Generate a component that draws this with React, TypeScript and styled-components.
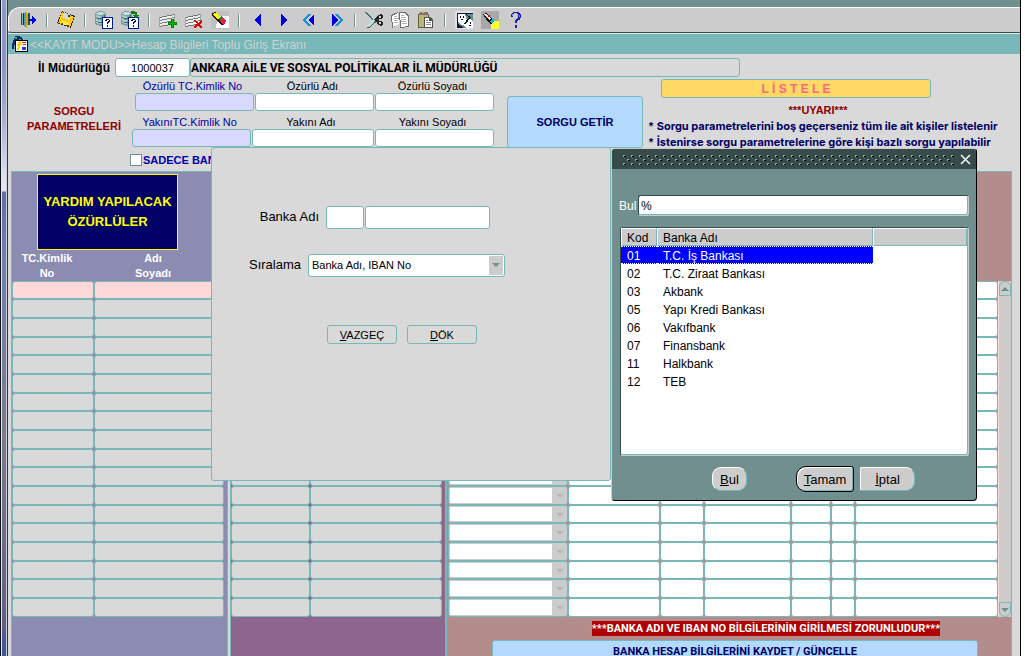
import React from 'react';
import styled, { createGlobalStyle, css } from 'styled-components';

const teal = '#78b8b8';
const slate = '#718f8f';
const panelGray = '#d9d9d9';
const chrome = '#cccccc';
const navy = '#000066';

const GlobalStyle = createGlobalStyle`
  * { box-sizing: border-box; }
  html, body { margin: 0; padding: 0; background: #fff; }
  body, input, select, button, table {
    font-family: 'Liberation Sans', Arial, Helvetica, sans-serif;
    font-size: 11px;
    color: #000;
  }
`;

/* ---------- window shell ---------- */

const Shell = styled.div`
  display: grid;
  grid-template-columns: 8px minmax(0, 1fr) 1px 4px;
  height: 100vh;
  overflow: hidden;
`;

const DesktopEdge = styled.div`
  border-left: 1px solid #111118;
  border-right: 1px solid #30344c;
  background: linear-gradient(
    #8c9cc8 0, #8494c8 60px, #a8b0d4 120px, #e0e4f4 180px, #e0e4f4 191px,
    #6070a8 192px, #7080b0 260px, #7c7c8c 430px, #625f84 625px, #40589a 645px
  );
  box-shadow: inset 1px 0 #e4e4ec, inset -1px 0 #d0d0dc;
`;

const WindowEdge = styled.div`
  background: #000;
`;

const Main = styled.div`
  display: flex;
  flex-direction: column;
  background: ${slate};
  padding-top: 7px;
  min-width: 0;
`;

const Toolbar = styled.div`
  display: flex;
  align-items: center;
  flex: none;
  height: 26px;
  padding-left: 6px;
  background: ${chrome};
  border-top: 1px solid #fff;
  border-left: 1px solid #fff;
  border-bottom: 1px solid #374b4b;
  border-radius: 12px 0 0 4px;
`;

const ToolButton = styled.button`
  display: flex;
  align-items: center;
  justify-content: center;
  width: 26px;
  height: 22px;
  padding: 0;
  border: 0;
  background: none;
`;

const Separator = styled.span`
  width: 2px;
  height: 13px;
  margin: 0 5px;
  border-left: 1px solid ${slate};
  border-right: 1px solid #fff;
`;

const TitleBar = styled.header`
  display: flex;
  align-items: center;
  gap: 2px;
  flex: none;
  height: 21px;
  padding-left: 4px;
  border-top: 1px solid #e8e8e8;
  background: ${teal};
`;

const Title = styled.h1`
  margin: 0;
  padding-top: 2px;
  font-size: 12px;
  line-height: 18px;
  font-weight: normal;
  color: #d0d0d0;
  white-space: nowrap;
`;

const Content = styled.main`
  position: relative;
  display: flex;
  flex-direction: column;
  flex: 1;
  min-height: 0;
  padding-top: 4px;
  background: ${panelGray};
`;

/* ---------- shared controls ---------- */

const field = css`
  border: 1px solid ${teal};
  border-radius: 3px;
  outline: 0;
  margin: 0;
`;

const TextField = styled.input<{ $w: number; $h?: number; $bg?: string; $bold?: boolean; $center?: boolean }>`
  ${field}
  display: block;
  width: ${p => p.$w}px;
  height: ${p => p.$h ?? 18}px;
  padding: 0 2px;
  background: ${p => p.$bg ?? '#fff'};
  font-weight: ${p => (p.$bold ? 'bold' : 'normal')};
  text-align: ${p => (p.$center ? 'center' : 'left')};
`;

/* ---------- query area ---------- */

const OfficeRow = styled.div`
  display: flex;
  align-items: center;
  height: 19px;
`;

const OfficeLabel = styled.label`
  width: 102px;
  margin-right: 5px;
  text-align: right;
  font-size: 12px;
  font-weight: bold;
  white-space: nowrap;
`;

const OfficeName = styled(TextField)`
  padding: 0;
  font-family: Roboto, 'Liberation Sans', sans-serif;
  font-size: 12px;
`;

const QueryArea = styled.section`
  display: flex;
  align-items: flex-start;
  height: 94px;
  padding-top: 2px;
`;

const QueryHeading = styled.h2`
  width: 122px;
  margin: 25px 0 0;
  padding-left: 10px;
  font-size: 11px;
  line-height: 15px;
  font-weight: bold;
  text-align: center;
  color: #8c0000;
`;

const QueryFields = styled.div`
  width: 364px;
`;

const FieldRow = styled.div`
  display: flex;
  justify-content: flex-end;
  gap: 1px;
  margin-bottom: 4px;
`;

const FieldGroup = styled.label<{ $blue?: boolean }>`
  font-size: 11px;
  color: ${p => (p.$blue ? '#0000b0' : '#000')};
`;

const FieldCaption = styled.span`
  display: block;
  padding-right: 4px;
  line-height: 14px;
  text-align: center;
  white-space: nowrap;
`;

const CheckLine = styled.label`
  display: flex;
  align-items: center;
  gap: 1px;
  height: 18px;
  font-size: 11px;
  font-weight: bold;
  color: #0000a8;
`;

const CheckBox = styled.input`
  appearance: none;
  width: 12px;
  height: 12px;
  margin: 0;
  border: 1px solid ${slate};
  background: #fff;
`;

const FetchButton = styled.button`
  ${field}
  width: 136px;
  height: 52px;
  margin: 17px 5px 0 13px;
  background: #b3d9ff;
  font-weight: bold;
  color: ${navy};
`;

const Notices = styled.div`
  flex: 1;
  min-width: 0;
  color: ${navy};
  font-weight: bold;
`;

const ListButton = styled.button`
  ${field}
  display: block;
  width: 270px;
  height: 19px;
  margin: 0 0 4px 13px;
  background: #ffd966;
  font-size: 12px;
  font-weight: bold;
  color: #ff6680;
  white-space: pre;
`;

const Warning = styled.p`
  width: 340px;
  margin: 0;
  line-height: 16px;
  text-align: center;
  color: #8c0000;
`;

const Hint = styled.p`
  margin: 0;
  font-family: Inter, 'Liberation Sans', sans-serif;
  font-size: 11px;
  line-height: 16px;
  white-space: nowrap;
`;

/* ---------- data panels ---------- */

const Panels = styled.div`
  display: flex;
  flex: 1;
  min-height: 0;
  padding: 0 8px 0 3px;
`;

const Panel = styled.section<{ $bg: string; $w?: number; $gap?: number }>`
  ${p => (p.$w ? css`flex: none; width: ${p.$w}px;` : css`flex: 1; min-width: 0;`)}
  margin-right: ${p => p.$gap ?? 0}px;
  border: 1px solid ${teal};
  border-bottom: 0;
  background: ${p => p.$bg};
`;

const Banner = styled.h2`
  width: 141px;
  height: 76px;
  margin: 2px 0 0 25px;
  padding-top: 17px;
  border: 1px solid #ffff00;
  background: ${navy};
  font-size: 13px;
  line-height: 20px;
  font-weight: bold;
  text-align: center;
  white-space: nowrap;
  color: #ffff00;
`;

const Spacer = styled.div`
  height: 109px;
`;

const Grid = styled.table`
  width: 100%;
  table-layout: fixed;
  border-spacing: 0;

  th {
    height: 31px;
    padding: 0 12px 0 0;
    font-size: 11px;
    line-height: 15px;
    color: #fff;
  }
  td { padding: 0; height: 19px; }
  tbody tr:nth-child(3n + 1) td { height: 18px; }
`;

const Cell = styled.input<{ $bg: string }>`
  ${field}
  display: block;
  width: 100%;
  height: 19px;
  padding: 0 2px;
  background: ${p => p.$bg};
  tr:nth-child(3n + 1) & { height: 18px; }
`;

const PickCell = styled.div`
  position: relative;
  svg { position: absolute; right: 4px; top: 8px; pointer-events: none; }
`;

const PickSelect = styled.select`
  ${field}
  appearance: none;
  display: block;
  width: 100%;
  height: 19px;
  padding: 0;
  background: linear-gradient(#fff, #fff) 1px 1px / calc(100% - 16px) calc(100% - 2px) no-repeat ${chrome};
  tr:nth-child(3n + 1) & { height: 18px; }
`;

const GridFrame = styled.div`
  display: flex;
  padding-left: 1px;
`;

const GridBody = styled.div<{ $right?: number }>`
  flex: 1;
  min-width: 0;
  padding-right: ${p => p.$right ?? 0}px;
`;

const ScrollTrack = styled.div`
  display: flex;
  flex-direction: column;
  justify-content: space-between;
  width: 13px;
  border-left: 1px solid #ffd9d9;
  background: ${chrome};
`;

const ScrollButton = styled.button<{ $down?: boolean }>`
  display: flex;
  align-items: center;
  justify-content: center;
  height: 15px;
  padding: 0;
  border: 1px solid ${teal};
  border-radius: ${p => (p.$down ? '0 0 6px 6px' : '6px 6px 0 0')};
  background: ${chrome};
`;

const AlertArea = styled.div`
  padding: 4px 33px 0 45px;
`;

const AlertLine = styled.div`
  display: flex;
  justify-content: center;
  padding-left: 62px;
  margin-bottom: 4px;
`;

const Alert = styled.p`
  margin: 0;
  background: #b00000;
  font-family: Roboto, 'Liberation Sans', sans-serif;
  font-size: 11px;
  font-weight: bold;
  line-height: 15px;
  white-space: nowrap;
  color: #fff;
`;

const SaveButton = styled.button`
  ${field}
  display: block;
  width: 100%;
  height: 22px;
  background: #b3d9ff;
  font-family: Roboto, 'Liberation Sans', sans-serif;
  font-weight: bold;
  color: ${navy};
`;

/* ---------- floating windows ---------- */

const PrintDialog = styled.section`
  position: absolute;
  left: 203px;
  top: 93px;
  width: 400px;
  height: 334px;
  padding-top: 57px;
  border: 1px solid ${teal};
  border-radius: 3px;
  background: ${panelGray};
`;

const DialogLine = styled.div`
  display: flex;
  align-items: center;
  gap: 1px;
  height: 24px;
  margin-bottom: 24px;
`;

const DialogLabel = styled.label<{ $w: number }>`
  width: ${p => p.$w}px;
  margin-right: 6px;
  text-align: right;
  font-size: 13px;
  line-height: 20px;
`;

const SelectWrap = styled.div`
  position: relative;
  width: 197px;
`;

const SortSelect = styled.select`
  ${field}
  appearance: none;
  display: block;
  width: 100%;
  height: 23px;
  padding: 0 20px 0 3px;
  background: #fff;
`;

const SelectArrow = styled.span`
  position: absolute;
  top: 2px;
  right: 2px;
  display: flex;
  align-items: center;
  justify-content: center;
  width: 14px;
  height: 19px;
  background: ${chrome};
  pointer-events: none;
`;

const DialogActions = styled.div`
  display: flex;
  gap: 10px;
  padding: 24px 0 0 115px;
`;

const FlatButton = styled.button`
  ${field}
  width: 70px;
  height: 19px;
  padding: 0;
  background: ${panelGray};
`;

const FindDialog = styled.section`
  position: absolute;
  left: 603px;
  top: 94px;
  width: 366px;
  height: 353px;
  border: 1px solid #000;
  border-left-color: ${chrome};
  border-top-color: ${chrome};
  border-radius: 4px;
  background: ${slate};
  overflow: hidden;
`;

const FindTitle = styled.div`
  display: flex;
  align-items: center;
  gap: 6px;
  height: 20px;
  padding: 0 5px 0 10px;
  background: #374b4b;
  svg { display: block; }
`;

const GripArea = styled.div`
  flex: 1;
  height: 12px;
`;

const CloseButton = styled.button`
  width: 11px;
  height: 11px;
  padding: 0;
  border: 0;
  background: none;
`;

const FindLine = styled.div`
  display: flex;
  align-items: center;
  margin: 26px 7px 11px 7px;
  height: 21px;
`;

const FindLabel = styled.label`
  width: 19px;
  font-size: 12px;
  color: #fff;
`;

const FindInput = styled.input`
  flex: 1;
  min-width: 0;
  height: 21px;
  padding: 0 2px;
  border: 1px solid #374b4b;
  border-right-color: ${chrome};
  border-bottom-color: ${chrome};
  border-radius: 3px;
  outline: 0;
  background: #fff;
  box-shadow: inset -1px -1px ${teal};
  font-size: 12px;
`;

const ListBox = styled.div`
  height: 229px;
  margin: 0 7px 0 8px;
  border: 1px solid #374b4b;
  border-right-color: ${chrome};
  border-bottom-color: ${chrome};
  border-radius: 3px;
  background: #fff;
  box-shadow: inset -1px -1px ${teal};
  padding-right: 1px;
`;

const BankTable = styled.table`
  width: 100%;
  table-layout: fixed;
  border-spacing: 0;
  font-size: 12px;

  th, td {
    height: 18px;
    padding: 2px 0 0 6px;
    line-height: 14px;
    text-align: left;
    font-weight: normal;
    white-space: nowrap;
  }
  th {
    background: ${chrome};
    border-top: 1px solid #fff;
    border-left: 1px solid #fff;
    border-right: 1px solid ${teal};
    border-bottom: 1px solid ${teal};
    padding-left: 5px;
  }
`;

const BankRow = styled.tr<{ $on?: boolean }>`
  ${p => p.$on && css`
    td:not(:last-child) {
      background: #0000ff;
      color: #fff;
      border-top: 1px dotted #fff;
      border-bottom: 1px dotted #fff;
    }
  `}
`;

const FindActions = styled.div`
  display: flex;
  align-items: center;
  gap: 6px;
  height: 26px;
  margin-top: 10px;
  padding-left: 100px;
`;

const PillButton = styled.button<{ $w: number; $shape: string; $primary?: boolean; $after?: number }>`
  width: ${p => p.$w}px;
  height: ${p => (p.$primary ? 26 : 24)}px;
  margin-right: ${p => p.$after ?? 0}px;
  padding: 0;
  border: 1px solid ${p => (p.$primary ? '#000' : teal)};
  ${p => !p.$primary && css`border-top-color: #fff; border-left-color: #fff;`}
  ${p => p.$primary && css`box-shadow: inset 1px 1px #fff, inset -1px -1px ${teal};`}
  border-radius: ${p => p.$shape};
  background: ${chrome};
  font-size: 13px;
`;

/* ---------- drawings ---------- */

const Icon = ({ children, size = 18 }: { children: React.ReactNode; size?: number }) => (
  <svg width={size} height={size} viewBox="0 0 18 18" shapeRendering="crispEdges" aria-hidden="true">{children}</svg>
);

const QuestionPage = () => (
  <>
    <rect x="7" y="6" width="11" height="12" fill="#002080" />
    <rect x="8" y="7" width="9" height="10" fill="#fff" />
    <path d="M10 9h1V8h3v1h1v2h-1v1h-1v1h-1v-2h1v-1h1V9h-2v1h-2zM12 14h1v2h-1z" fill="#000080" />
  </>
);

const Cylinder = () => (
  <>
    <path d="M3 0h5v1h2v1h1v11h-1v1H8v1H4v-1H1v-1H0V2h1V1h2z" fill="#7aa0a0" />
    <path d="M3 1h5v1h2v1H8v1H3V3H1V2h2z" fill="#c4dede" />
    <path d="M1 4h2v1h3v2H3V6H1zM1 8h2v1h3v2H3v-1H1zM1 11h2v1h3v1H3v-1H1z" fill="#a8cccc" />
    <path d="M9 4h1v9H9zM3 7h4v1H3zM3 11h4v1H3z" fill="#406868" />
  </>
);

const Sheet = () => (
  <>
    <path d="M1 7l14-3v2L1 9zM1 10l14-3v2L1 12zM1 13l14-3v2L1 15z" fill="#f0f0f0" />
    <path d="M0 6l5-1 11-2v1L0 7zM0 9l16-3v1L0 10zM0 12l16-3v1L0 13zM0 15l12-2v1L0 16z" fill="#787878" />
    <path d="M0 6h1v10H0zM15 3h1v6h-1z" fill="#a0a0a0" />
  </>
);

const icons: Record<string, React.ReactNode> = {
  exit: (
    <Icon>
      <path d="M2 3h9v11H2z" fill="#78b0b0" />
      <path d="M2 2h1v12H2zM9 2h2v12H9z" fill="#285050" />
      <path d="M4 2l4-1v16l-4-3z" fill="#58a0a0" />
      <path d="M4 2h1v12H4z" fill="#183838" />
      <path d="M7 1h1v16H7z" fill="#c8a828" />
      <path d="M10 8h3V5h1v1h1v1h1v1h1v2h-1v1h-1v1h-1v1h-1v-3h-3z" fill="#0000e0" />
    </Icon>
  ),
  save: (
    <Icon>
      <path d="M5 0l13 5-4 12L0 12z" fill="#302000" />
      <path d="M5 1l12 5-4 10L1 12z" fill="#ffcc00" />
      <path d="M7 1l7 3-2 5-7-3z" fill="#d8d8d8" />
      <path d="M11 4h2v2h-2z" fill="#303030" />
      <path d="M5 9l7 3-2 3-6-2z" fill="#ffe860" />
      <path d="M4 12h2v1H4zM9 14h3v1H9z" fill="#806000" />
    </Icon>
  ),
  query: <Icon><Cylinder /><QuestionPage /></Icon>,
  run: (
    <Icon>
      <Cylinder /><QuestionPage />
      <path d="M10 0h4v1h2v3h2v1h-1v1h-1v1h-2V6h-1V5h-1V4h2V3h-4z" fill="#108010" />
    </Icon>
  ),
  add: (
    <Icon>
      <Sheet />
      <path d="M12 8h3v3h3v3h-3v3h-3v-3H9v-3h3z" fill="#008000" />
      <path d="M13 9h1v3h3v1h-3v3h-1v-3h-3v-1h3z" fill="#00c000" />
    </Icon>
  ),
  remove: (
    <Icon>
      <Sheet />
      <path d="M9 9h2l2 3 3-3h1v2l-2 2 2 3v1h-2l-2-3-3 3H9v-2l3-2-3-3z" fill="#e00000" />
    </Icon>
  ),
  clear: (
    <Icon>
      <rect x="0" y="0" width="18" height="18" fill="#c0c0c0" />
      <path d="M9 5h9v12H5v-3z" fill="#fff" />
      <path d="M1 2l3-1 10 9-3 5L1 5z" fill="#181800" />
      <path d="M3 2h2l4 4-2 2-5-4z" fill="#ffff00" />
      <path d="M7 8l3-3 2 2-3 3z" fill="#208020" />
      <path d="M9 9l3-2 3 3-1 3-2 1-3-3z" fill="#e02050" />
    </Icon>
  ),
  prev: <Icon><path d="M12 3v12h-1v-1h-1v-1H9v-1H8v-1H7v-1H6V8h1V7h1V6h1V5h1V4h1V3z" fill="#0000e0" /></Icon>,
  next: <Icon><path d="M6 3v12h1v-1h1v-1h1v-1h1v-1h1v-1h1V8h-1V7h-1V6H9V5H8V4H7V3z" fill="#0000e0" /></Icon>,
  first: (
    <Icon>
      <path d="M7 3h3L5 9l5 6H7L2 9z" fill="#1890d8" />
      <path d="M13 3v12L7 9z" fill="#0000e0" />
    </Icon>
  ),
  last: (
    <Icon>
      <path d="M8 3h3l5 6-5 6H8l5-6z" fill="#1890d8" />
      <path d="M5 3v12l6-6z" fill="#0000e0" />
    </Icon>
  ),
  cut: (
    <Icon>
      <path d="M0 2h2l9 7-1 3z" fill="#d8f4f4" />
      <path d="M0 1h1l10 10-1 1zM0 2l1 2 3 3z" fill="#407070" />
      <path d="M1 15h3l7-6-1-2z" fill="#c0e0e0" />
      <path d="M1 16h3l7-7v1l-6 7H2z" fill="#306060" />
      <path d="M9 8l3-2 1-2 3-1 2 1v2l-2 2-4 1 4 1 2 2v2l-2 1-3-1-1-3-3-2zM14 5v2h2V5zM14 11v2h2v-2z" fill="#282828" fillRule="evenodd" />
    </Icon>
  ),
  copy: (
    <Icon>
      <path d="M0 4l7-3 1 12-7 4zM8 1h6l4 3v12l-9 1z" fill="#707070" />
      <path d="M1 5l6-3 1 11-6 3zM9 2h4l4 3v10l-7 1z" fill="#fff" />
      <path d="M3 5h3v1H3zM3 7h4v1H3zM3 9h4v1H3zM3 11h4v1H3zM10 4h3v1h-3zM10 6h5v1h-5zM10 8h5v1h-5zM10 10h5v1h-5zM11 12h5v1h-5z" fill="#b0b0b0" />
    </Icon>
  ),
  paste: (
    <Icon>
      <path d="M1 3h11v14H1z" fill="#606030" />
      <path d="M2 4h9v12H2z" fill="#b8b47c" />
      <path d="M3 1h8l1 3H2z" fill="#787878" />
      <path d="M5 0h2v2H5z" fill="#e0c040" />
      <path d="M7 6h6l3 3v8H7z" fill="#505050" />
      <path d="M8 7h4v3h3v6H8z" fill="#fff" />
      <path d="M9 9h2v1H9zM9 11h5v1H9zM9 13h5v1H9z" fill="#909090" />
    </Icon>
  ),
  keys: (
    <Icon>
      <path d="M0 0h18v18H0z" fill="#e0e0f4" />
      <path d="M2 2h16v15H3z" fill="#6c8c94" />
      <path d="M3 3h7l2 6-5 5-4-3z" fill="#fff" />
      <path d="M8 14l6-7 4 4v6h-7z" fill="#fff" />
      <path d="M2 2h16v1H3v10l6 4H2zM11 3l5 3-6 8-1-1 5-7-3-2z" fill="#101828" />
      <path d="M5 5h1v2H5zM8 5h1v2H8zM6 8h2v1H6zM15 11h1v2h-1zM14 14h2v1h-2z" fill="#0000a0" />
    </Icon>
  ),
  torch: (
    <Icon>
      <rect width="18" height="18" fill="#a8a8a8" />
      <path d="M2 3l3-1 9 8-3 4-5-4z" fill="#101010" />
      <path d="M3 3h2l5 5-2 1z" fill="#f0f0f0" />
      <path d="M7 4h2v2H7z" fill="#e00000" />
      <path d="M9 10l3-3 2 3-3 3z" fill="#00b8e0" />
      <path d="M10 13l4-3h4v8h-8z" fill="#ffff30" />
      <path d="M12 14h1v1h-1zM14 12h1v1h-1zM14 16h1v1h-1zM16 14h1v1h-1zM16 11h1v1h-1z" fill="#fff" />
    </Icon>
  ),
  help: (
    <Icon>
      <path d="M4 3h1V2h1V1h6v1h1v1h1v4h-1v2h-2v1h-1v2H8V9h1V8h1V7h1V3h-1V2H7v1H6v3H4zM8 14h2v3H8z" fill="#2020b0" />
      <path d="M5 3h1v2H5zM12 4h1v2h-1z" fill="#8080e0" />
    </Icon>
  ),
};

const Triangle = ({ down, color = slate }: { down?: boolean; color?: string }) => (
  <svg width="8" height="4" viewBox="0 0 8 4" aria-hidden="true">
    <path d={down ? 'M0 0h8L4 4z' : 'M0 4h8L4 0z'} fill={color} />
  </svg>
);

const AppIcon = () => (
  <svg width="16" height="16" viewBox="0 0 16 16" shapeRendering="crispEdges" aria-hidden="true">
    <path d="M3 0h5v1h2v2h1v5H1V4h1V2h1z" fill="#102878" />
    <path d="M3 1h2v2H3zM7 3h2v2H7z" fill="#50a860" />
    <path d="M0 7h4v2H2v4H0z" fill="#102878" />
    <rect x="3" y="4" width="13" height="12" fill="#000" />
    <rect x="4" y="5" width="11" height="10" fill="#fff" />
    <path d="M10 6h4v1h-4zM11 8h3v1h-3z" fill="#e02020" />
    <path d="M10 11h4v3h-4z" fill="#2040d0" />
    <path d="M7 5h2v3h1v1H8v3H7v2H5v-2h1v-2H5V8h1z" fill="#ffd000" />
  </svg>
);

const Grip = () => (
  <svg width="100%" height="12" shapeRendering="crispEdges" aria-hidden="true">
    <defs>
      <pattern id="grip" width="8" height="8" patternUnits="userSpaceOnUse">
        <path d="M2 3h2v1H2zM6 7h2v1H6z" fill="#000" />
        <path d="M1 2h2v1H1zM1 3h1v1H1zM5 6h2v1H5zM5 7h1v1H5z" fill={teal} />
      </pattern>
    </defs>
    <rect width="100%" height="12" fill="url(#grip)" />
  </svg>
);

/* ---------- page ---------- */

const toolGroups: [string, string][][] = [
  [['exit', 'Çıkış']],
  [['save', 'Kaydet']],
  [['query', 'Sorgu'], ['run', 'Sorguyu çalıştır']],
  [['add', 'Kayıt ekle'], ['remove', 'Kayıt sil'], ['clear', 'Temizle']],
  [['prev', 'Önceki'], ['next', 'Sonraki'], ['first', 'İlk'], ['last', 'Son']],
  [['cut', 'Kes'], ['copy', 'Kopyala'], ['paste', 'Yapıştır']],
  [['keys', 'Tuşlar'], ['torch', 'Bul'], ['help', 'Yardım']],
];

const banks: [string, string][] = [
  ['01', 'T.C. İş Bankası'],
  ['02', 'T.C. Ziraat Bankası'],
  ['03', 'Akbank'],
  ['05', 'Yapı Kredi Bankası'],
  ['06', 'Vakıfbank'],
  ['07', 'Finansbank'],
  ['11', 'Halkbank'],
  ['12', 'TEB'],
];

const rows = Array.from({ length: 18 }, (_, i) => i);

const PersonGrid = ({ first, head, activeFirst }: { first: number; head?: [string, string][]; activeFirst?: boolean }) => (
  <Grid>
    <colgroup><col style={{ width: first }} /><col /></colgroup>
    {head && (
      <thead>
        <tr>{head.map(([a, b]) => <th key={a} scope="col">{a}<br />{b}</th>)}</tr>
      </thead>
    )}
    <tbody>
      {rows.map(r => (
        <tr key={r}>
          {[0, 1].map(c => (
            <td key={c}>
              <Cell aria-label={`${r + 1}-${c + 1}`} readOnly $bg={activeFirst && r === 0 ? '#ffd9d9' : panelGray} />
            </td>
          ))}
        </tr>
      ))}
    </tbody>
  </Grid>
);

const accountColumns = [120, 92, 44, 87, 40, 24];

const AccountGrid = () => (
  <Grid>
    <colgroup>
      {accountColumns.map((w, i) => <col key={i} style={{ width: w }} />)}
      <col />
    </colgroup>
    <tbody>
      {rows.map(r => (
        <tr key={r}>
          <td>
            <PickCell>
              <PickSelect aria-label={`${r + 1}`} />
              <Triangle down color="#b8b8b8" />
            </PickCell>
          </td>
          {accountColumns.map((_, c) => (
            <td key={c}><Cell aria-label={`${r + 1}-${c + 2}`} readOnly $bg="#fff" /></td>
          ))}
        </tr>
      ))}
    </tbody>
  </Grid>
);

export default function App() {
  return (
    <>
      <GlobalStyle />
      <Shell>
        <DesktopEdge />
        <Main>
          <Toolbar role="toolbar">
            {toolGroups.map((group, g) => (
              <React.Fragment key={g}>
                {g > 0 && <Separator />}
                {group.map(([name, label]) => (
                  <ToolButton key={name} aria-label={label}>{icons[name]}</ToolButton>
                ))}
              </React.Fragment>
            ))}
          </Toolbar>
          <TitleBar>
            <AppIcon />
            <Title>&lt;&lt;KAYIT MODU&gt;&gt;Hesap Bilgileri Toplu Giriş Ekranı</Title>
          </TitleBar>
          <Content>
            <OfficeRow>
              <OfficeLabel htmlFor="office">İl Müdürlüğü</OfficeLabel>
              <TextField id="office" $w={75} $h={19} $center defaultValue="1000037" />
              <OfficeName aria-label="İl Müdürlüğü adı" $w={550} $h={19} $bg={panelGray} $bold readOnly
                value="ANKARA AİLE VE SOSYAL POLİTİKALAR İL MÜDÜRLÜĞÜ" />
            </OfficeRow>
            <QueryArea>
              <QueryHeading>SORGU<br />PARAMETRELERİ</QueryHeading>
              <QueryFields>
                <FieldRow>
                  <FieldGroup $blue><FieldCaption>Özürlü TC.Kimlik No</FieldCaption><TextField $w={119} $bg="#d9d9ff" /></FieldGroup>
                  <FieldGroup><FieldCaption>Özürlü Adı</FieldCaption><TextField $w={119} /></FieldGroup>
                  <FieldGroup><FieldCaption>Özürlü Soyadı</FieldCaption><TextField $w={119} /></FieldGroup>
                </FieldRow>
                <FieldRow>
                  <FieldGroup $blue><FieldCaption>YakınıTC.Kimlik No</FieldCaption><TextField $w={119} $bg="#d9d9ff" /></FieldGroup>
                  <FieldGroup><FieldCaption>Yakını Adı</FieldCaption><TextField $w={122} /></FieldGroup>
                  <FieldGroup><FieldCaption>Yakını Soyadı</FieldCaption><TextField $w={119} /></FieldGroup>
                </FieldRow>
                <CheckLine><CheckBox type="checkbox" />SADECE BAN</CheckLine>
              </QueryFields>
              <FetchButton>SORGU GETİR</FetchButton>
              <Notices>
                <ListButton>L İ S T E L E</ListButton>
                <Warning>***UYARI***</Warning>
                <Hint>* Sorgu parametrelerini boş geçerseniz tüm ile ait kişiler listelenir</Hint>
                <Hint>* İstenirse sorgu parametrelerine göre kişi bazlı sorgu yapılabilir</Hint>
              </Notices>
            </QueryArea>
            <Panels>
              <Panel $bg="#8c8cb3" $w={217} $gap={2}>
                <Banner>YARDIM YAPILACAK<br />ÖZÜRLÜLER</Banner>
                <GridBody $right={3}>
                  <PersonGrid first={82} head={[['TC.Kimlik', 'No'], ['Adı', 'Soyadı']]} activeFirst />
                </GridBody>
              </Panel>
              <Panel $bg="#8c668c" $w={216}>
                <Spacer />
                <GridBody $right={3}><PersonGrid first={79} /></GridBody>
              </Panel>
              <Panel $bg="#b38c8c">
                <Spacer />
                <GridFrame>
                  <GridBody><AccountGrid /></GridBody>
                  <ScrollTrack>
                    <ScrollButton aria-label="Yukarı"><Triangle /></ScrollButton>
                    <ScrollButton aria-label="Aşağı" $down><Triangle down /></ScrollButton>
                  </ScrollTrack>
                </GridFrame>
                <AlertArea>
                  <AlertLine>
                    <Alert>***BANKA ADI VE IBAN NO BİLGİLERİNİN GİRİLMESİ ZORUNLUDUR***</Alert>
                  </AlertLine>
                  <SaveButton>BANKA HESAP BİLGİLERİNİ KAYDET / GÜNCELLE</SaveButton>
                </AlertArea>
              </Panel>
            </Panels>

            <PrintDialog role="dialog" aria-label="Döküm">
              <DialogLine>
                <DialogLabel $w={107} htmlFor="bankCode">Banka Adı</DialogLabel>
                <TextField id="bankCode" $w={38} $h={23} />
                <TextField aria-label="Banka Adı" $w={125} $h={23} />
              </DialogLine>
              <DialogLine>
                <DialogLabel $w={89} htmlFor="sort">Sıralama</DialogLabel>
                <SelectWrap>
                  <SortSelect id="sort"><option>Banka Adı, IBAN No</option></SortSelect>
                  <SelectArrow><Triangle down /></SelectArrow>
                </SelectWrap>
              </DialogLine>
              <DialogActions>
                <FlatButton><u>V</u>AZGEÇ</FlatButton>
                <FlatButton><u>D</u>ÖK</FlatButton>
              </DialogActions>
            </PrintDialog>

            <FindDialog role="dialog" aria-label="Bul">
              <FindTitle>
                <GripArea><Grip /></GripArea>
                <CloseButton aria-label="Kapat">
                  <svg width="11" height="11" viewBox="0 0 11 11"><path d="M1 1l9 9M10 1l-9 9" stroke="#f4f4f0" strokeWidth="1.6" /></svg>
                </CloseButton>
              </FindTitle>
              <FindLine>
                <FindLabel htmlFor="find">Bul</FindLabel>
                <FindInput id="find" defaultValue="%" />
              </FindLine>
              <ListBox>
                <BankTable>
                  <colgroup><col style={{ width: 36 }} /><col style={{ width: 216 }} /><col /></colgroup>
                  <thead>
                    <tr><th scope="col">Kod</th><th scope="col">Banka Adı</th><th /></tr>
                  </thead>
                  <tbody>
                    {banks.map(([code, name], i) => (
                      <BankRow key={code} $on={i === 0}><td>{code}</td><td>{name}</td><td /></BankRow>
                    ))}
                  </tbody>
                </BankTable>
              </ListBox>
              <FindActions>
                <PillButton $w={35} $shape="9px" $after={43}><u>B</u>ul</PillButton>
                <PillButton $w={58} $shape="10px 3px 3px 10px" $primary><u>T</u>amam</PillButton>
                <PillButton $w={55} $shape="2px 9px 9px 2px"><u>İ</u>ptal</PillButton>
              </FindActions>
            </FindDialog>
          </Content>
        </Main>
        <WindowEdge />
      </Shell>
    </>
  );
}
